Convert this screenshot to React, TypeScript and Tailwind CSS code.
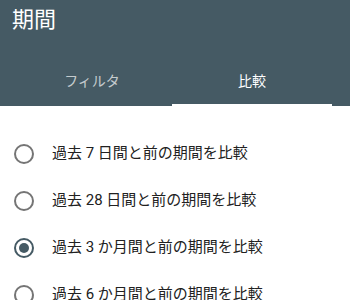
import { useState } from 'react'

const options = [
  '過去 7 日間と前の期間を比較',
  '過去 28 日間と前の期間を比較',
  '過去 3 か月間と前の期間を比較',
  '過去 6 か月間と前の期間を比較',
]

export default function App() {
  const [tab, setTab] = useState(1)
  const [selected, setSelected] = useState(2)
  const tabs = ['フィルタ', '比較']

  return (
    <div className="w-[350px] h-[300px] overflow-hidden bg-white font-['Roboto','Noto_Sans_CJK_JP',sans-serif]">
      {/* Header */}
      <div className="bg-[#455a64] h-[106px] flex flex-col">
        <h1 className="px-3 pt-[5px] text-[22px] leading-[30px] text-white">期間</h1>
        <div className="mt-auto flex px-3">
          {tabs.map((label, i) => (
            <button
              key={label}
              onClick={() => setTab(i)}
              className={`w-[160px] h-12 flex items-center justify-center text-[14px] border-b-2 ${
                tab === i ? 'text-white border-white' : 'text-white/70 border-transparent'
              }`}
            >
              {label}
            </button>
          ))}
        </div>
      </div>

      {/* Options */}
      <div className="pt-6">
        {options.map((label, i) => {
          const checked = selected === i
          return (
            <label
              key={label}
              onClick={() => setSelected(i)}
              className="h-[47px] flex items-center pl-[14px] gap-[18px] cursor-pointer"
            >
              <span
                className={`w-5 h-5 rounded-full border-2 flex items-center justify-center shrink-0 ${
                  checked ? 'border-[#455a64]' : 'border-[#757575]'
                }`}
              >
                {checked && <span className="w-2.5 h-2.5 rounded-full bg-[#455a64]" />}
              </span>
              <span className="text-[15px] text-[#212121]">{label}</span>
            </label>
          )
        })}
      </div>
    </div>
  )
}
